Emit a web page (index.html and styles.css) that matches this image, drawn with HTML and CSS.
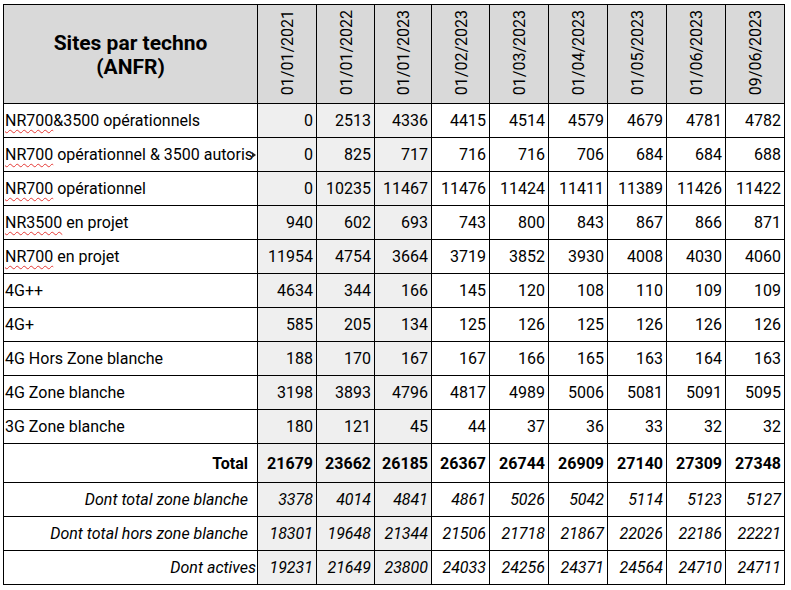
FILE: index.html
```html
<!DOCTYPE html>
<html lang="fr">
<head>
<meta charset="utf-8">
<title>Sites par techno (ANFR)</title>
<link rel="stylesheet" href="styles.css">
</head>
<body>
<div class="sheet" role="table">
  <div class="cell head title">Sites par techno<br>(ANFR)</div>
  <div class="cell head date"><span>01/01/2021</span></div>
  <div class="cell head date"><span>01/01/2022</span></div>
  <div class="cell head date"><span>01/01/2023</span></div>
  <div class="cell head date"><span>01/02/2023</span></div>
  <div class="cell head date"><span>01/03/2023</span></div>
  <div class="cell head date"><span>01/04/2023</span></div>
  <div class="cell head date"><span>01/05/2023</span></div>
  <div class="cell head date"><span>01/06/2023</span></div>
  <div class="cell head date"><span>09/06/2023</span></div>

  <div class="cell label"><span class="txt"><span class="spell">NR700</span>&amp;3500 opérationnels</span></div>
  <div class="cell num grey">0</div><div class="cell num grey">2513</div><div class="cell num grey">4336</div>
  <div class="cell num">4415</div><div class="cell num">4514</div><div class="cell num">4579</div><div class="cell num">4679</div><div class="cell num">4781</div><div class="cell num">4782</div>

  <div class="cell label clipped"><span class="txt"><span class="spell">NR700</span> opérationnel &amp; 3500 autoris</span><i class="overflow-mark"></i></div>
  <div class="cell num grey">0</div><div class="cell num grey">825</div><div class="cell num grey">717</div>
  <div class="cell num">716</div><div class="cell num">716</div><div class="cell num">706</div><div class="cell num">684</div><div class="cell num">684</div><div class="cell num">688</div>

  <div class="cell label"><span class="txt"><span class="spell">NR700</span> opérationnel</span></div>
  <div class="cell num grey">0</div><div class="cell num grey">10235</div><div class="cell num grey">11467</div>
  <div class="cell num">11476</div><div class="cell num">11424</div><div class="cell num">11411</div><div class="cell num">11389</div><div class="cell num">11426</div><div class="cell num">11422</div>

  <div class="cell label"><span class="txt"><span class="spell">NR3500</span> en projet</span></div>
  <div class="cell num grey">940</div><div class="cell num grey">602</div><div class="cell num grey">693</div>
  <div class="cell num">743</div><div class="cell num">800</div><div class="cell num">843</div><div class="cell num">867</div><div class="cell num">866</div><div class="cell num">871</div>

  <div class="cell label"><span class="txt"><span class="spell">NR700</span> en projet</span></div>
  <div class="cell num grey">11954</div><div class="cell num grey">4754</div><div class="cell num grey">3664</div>
  <div class="cell num">3719</div><div class="cell num">3852</div><div class="cell num">3930</div><div class="cell num">4008</div><div class="cell num">4030</div><div class="cell num">4060</div>

  <div class="cell label"><span class="txt">4G++</span></div>
  <div class="cell num grey">4634</div><div class="cell num grey">344</div><div class="cell num grey">166</div>
  <div class="cell num">145</div><div class="cell num">120</div><div class="cell num">108</div><div class="cell num">110</div><div class="cell num">109</div><div class="cell num">109</div>

  <div class="cell label"><span class="txt">4G+</span></div>
  <div class="cell num grey">585</div><div class="cell num grey">205</div><div class="cell num grey">134</div>
  <div class="cell num">125</div><div class="cell num">126</div><div class="cell num">125</div><div class="cell num">126</div><div class="cell num">126</div><div class="cell num">126</div>

  <div class="cell label"><span class="txt">4G Hors Zone blanche</span></div>
  <div class="cell num grey">188</div><div class="cell num grey">170</div><div class="cell num grey">167</div>
  <div class="cell num">167</div><div class="cell num">166</div><div class="cell num">165</div><div class="cell num">163</div><div class="cell num">164</div><div class="cell num">163</div>

  <div class="cell label"><span class="txt">4G Zone blanche</span></div>
  <div class="cell num grey">3198</div><div class="cell num grey">3893</div><div class="cell num grey">4796</div>
  <div class="cell num">4817</div><div class="cell num">4989</div><div class="cell num">5006</div><div class="cell num">5081</div><div class="cell num">5091</div><div class="cell num">5095</div>

  <div class="cell label"><span class="txt">3G Zone blanche</span></div>
  <div class="cell num grey">180</div><div class="cell num grey">121</div><div class="cell num grey">45</div>
  <div class="cell num">44</div><div class="cell num">37</div><div class="cell num">36</div><div class="cell num">33</div><div class="cell num">32</div><div class="cell num">32</div>

  <div class="cell label total right"><span class="txt">Total</span></div>
  <div class="cell num grey total">21679</div><div class="cell num grey total">23662</div><div class="cell num grey total">26185</div>
  <div class="cell num total">26367</div><div class="cell num total">26744</div><div class="cell num total">26909</div><div class="cell num total">27140</div><div class="cell num total">27309</div><div class="cell num total">27348</div>

  <div class="cell label sub right"><span class="txt">Dont total zone blanche</span></div>
  <div class="cell num grey sub">3378</div><div class="cell num grey sub">4014</div><div class="cell num grey sub">4841</div>
  <div class="cell num sub">4861</div><div class="cell num sub">5026</div><div class="cell num sub">5042</div><div class="cell num sub">5114</div><div class="cell num sub">5123</div><div class="cell num sub">5127</div>

  <div class="cell label sub right"><span class="txt">Dont total hors zone blanche</span></div>
  <div class="cell num grey sub">18301</div><div class="cell num grey sub">19648</div><div class="cell num grey sub">21344</div>
  <div class="cell num sub">21506</div><div class="cell num sub">21718</div><div class="cell num sub">21867</div><div class="cell num sub">22026</div><div class="cell num sub">22186</div><div class="cell num sub">22221</div>

  <div class="cell label sub right tight"><span class="txt">Dont actives</span></div>
  <div class="cell num grey sub">19231</div><div class="cell num grey sub">21649</div><div class="cell num grey sub">23800</div>
  <div class="cell num sub">24033</div><div class="cell num sub">24256</div><div class="cell num sub">24371</div><div class="cell num sub">24564</div><div class="cell num sub">24710</div><div class="cell num sub">24711</div>
</div>
</body>
</html>
```

FILE: styles.css
```css
html, body {
  margin: 0;
  padding: 0;
  background: #ffffff;
}

body {
  padding: 4px 0 0 3px;
  font-family: Roboto, "Liberation Sans", Arial, sans-serif;
  font-size: 16px;
  color: #000000;
}

.sheet {
  display: grid;
  grid-template-columns: 254px 59px 58px 57px 58px 59px 59px 59px 59px 59px;
  grid-template-rows: 99px repeat(10, 34px) 39px repeat(3, 34px);
  width: 781px;
  border-left: 1px solid #000000;
  border-top: 1px solid #000000;
}

.cell {
  box-sizing: border-box;
  border-right: 1px solid #000000;
  border-bottom: 1px solid #000000;
  display: flex;
  align-items: center;
  white-space: nowrap;
  overflow: hidden;
  line-height: 19px;
}

.head {
  background: #d9d9d9;
}

.title {
  justify-content: center;
  text-align: center;
  font-size: 21px;
  font-weight: 700;
  line-height: 24px;
  padding-top: 2px;
}

.date {
  align-items: flex-end;
  justify-content: center;
  padding-bottom: 8px;
  padding-left: 1px;
}

.date span {
  writing-mode: vertical-rl;
  transform: rotate(180deg);
  line-height: 19px;
}

.label {
  justify-content: flex-start;
  padding-left: 1px;
  position: relative;
}

.txt {
  min-width: 0;
  white-space: nowrap;
}

.label.right {
  justify-content: flex-end;
  padding-right: 9px;
}

.label.tight {
  padding-right: 1px;
}

.clipped {
  padding-right: 5px;
}

.overflow-mark {
  position: absolute;
  right: 1px;
  top: 50%;
  margin-top: -3px;
  width: 0;
  height: 0;
  border-top: 3px solid transparent;
  border-bottom: 3px solid transparent;
  border-left: 4px solid #222222;
}

.spell {
  text-decoration: underline wavy #e53935;
  text-decoration-thickness: 1px;
  text-underline-offset: 3px;
}

.num {
  justify-content: flex-end;
  padding-right: 3px;
}

.grey {
  background: #efefef;
}

.total {
  font-weight: 700;
}

.sub {
  font-style: italic;
}
```
